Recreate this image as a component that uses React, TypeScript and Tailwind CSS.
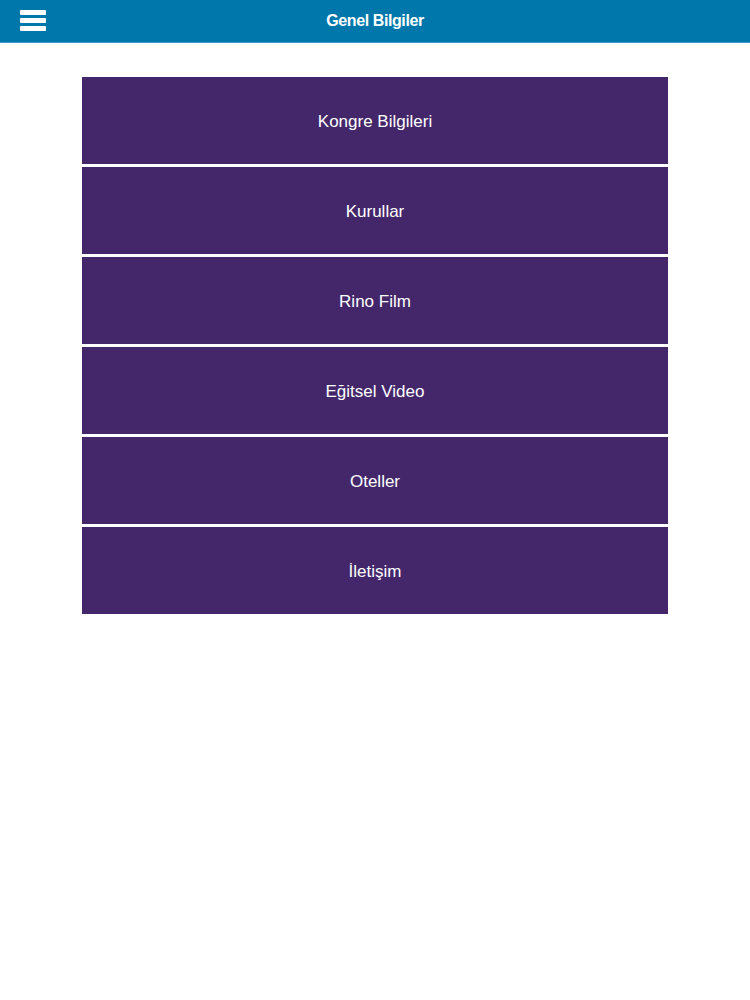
import React from "react";

const items = ["Kongre Bilgileri", "Kurullar", "Rino Film", "Eğitsel Video", "Oteller", "İletişim"];

export default function App() {
  return (
    <div className="min-h-[1000px] bg-white font-['Liberation_Sans',Arial,sans-serif]">
      {/* Header */}
      <header className="relative flex h-[43px] items-center justify-center border-b border-[#3d9acb] bg-[#0077ab]">
        <button className="absolute left-[20px] top-[10px] flex w-[26px] flex-col gap-[3px]">
          <span className="block h-[5px] w-full rounded-[1px] bg-white" />
          <span className="block h-[5px] w-full rounded-[1px] bg-white" />
          <span className="block h-[5px] w-full rounded-[1px] bg-white" />
        </button>
        <h1 className="text-[16px] font-bold tracking-tight text-white">Genel Bilgiler</h1>
      </header>

      {/* Menu */}
      <nav className="mx-auto mt-[34px] flex w-[586px] flex-col gap-[3px]">
        {items.map((label) => (
          <div
            key={label}
            className="flex h-[87px] items-center justify-center bg-[#43276a] pt-[2px] text-[17px] text-white"
          >
            {label}
          </div>
        ))}
      </nav>
    </div>
  );
}
